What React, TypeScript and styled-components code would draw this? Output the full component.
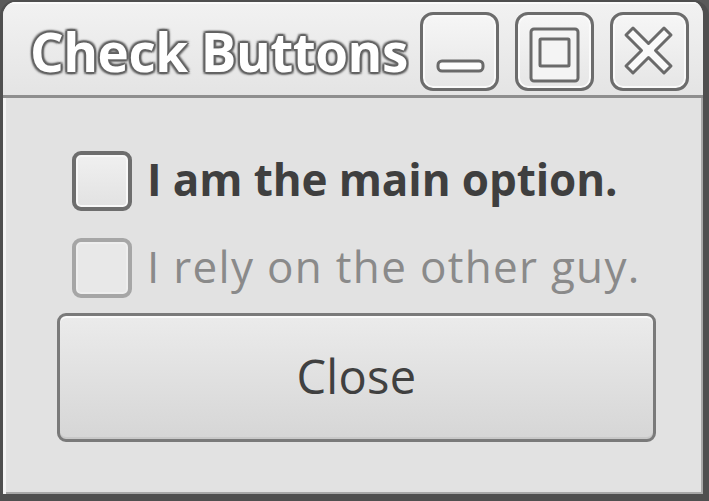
import React from "react";
import styled, { createGlobalStyle } from "styled-components";

const Global = createGlobalStyle`
  html, body { margin: 0; padding: 0; background: #5a5a5a; }
  #root { width: 709px; height: 501px; overflow: hidden; }
  * { box-sizing: border-box; }
`;

const Window = styled.div`
  width: 709px;
  height: 501px;
  display: flex;
  flex-direction: column;
  background: #e2e2e2;
  border-style: solid;
  border-color: #4f4f4f;
  border-width: 2px 6px 7px 3px;
  border-radius: 16px 16px 0 0;
  box-shadow: inset 3px 0 0 #f4f4f4, inset -2px -2px 0 #a8a8a8;
  font-family: "Open Sans", "Noto Sans", sans-serif;
  overflow: hidden;
`;

const TitleBar = styled.div`
  height: 96px;
  flex: none;
  display: flex;
  align-items: center;
  padding: 6px 14px 0 24px;
  background: linear-gradient(#f2f2f2, #e4e4e4);
  border-bottom: 3px solid #8e8e8e;
  box-shadow: inset 0 2px 0 #fbfbfb;
`;

const Title = styled.div`
  flex: 1;
  min-width: 0;
  overflow: hidden;
  white-space: nowrap;
  font-size: 53px;
  font-weight: 700;
  color: #ffffff;
  letter-spacing: -0.5px;
  line-height: 70px;
  padding-left: 3px;
  text-shadow: 0 0 2px #555, 2px 0 1px #666, -2px 0 1px #666, 0 2px 1px #666,
    0 -2px 1px #666, 2px 2px 2px #777, -2px -2px 2px #777, 2px -2px 2px #777,
    -2px 2px 2px #777;
  margin-right: 11px;
`;

const Controls = styled.div`
  display: flex;
  gap: 16px;
`;

const WinButton = styled.div`
  width: 79px;
  height: 79px;
  border: 3px solid #6c6c6c;
  border-radius: 13px;
  background: linear-gradient(#f6f6f6, #e6e6e6);
  box-shadow: inset 0 0 0 2px #fafafa;
  display: flex;
  align-items: center;
  justify-content: center;
`;

const Body = styled.div`
  flex: 1;
  display: flex;
  flex-direction: column;
  padding: 53px 44px 0 54px;
`;

const Row = styled.div`
  display: flex;
  align-items: center;
  gap: 15px;
  height: 60px;
  margin-left: 15px;
  margin-bottom: 27px;
`;

const Box = styled.div<{ $dim?: boolean }>`
  width: 60px;
  height: 60px;
  flex: none;
  border: 4px solid ${(p) => (p.$dim ? "#a6a6a6" : "#6e6e6e")};
  border-radius: 9px;
  background: ${(p) => (p.$dim ? "#e8e8e8" : "linear-gradient(#f0f0f0, #e2e2e2)")};
  box-shadow: inset 0 0 0 2px ${(p) => (p.$dim ? "#eeeeee" : "#f8f8f8")};
`;

const Label = styled.span<{ $dim?: boolean }>`
  font-size: 44px;
  font-weight: ${(p) => (p.$dim ? 400 : 700)};
  color: ${(p) => (p.$dim ? "#8a8a8a" : "#3f3f3f")};
  letter-spacing: ${(p) => (p.$dim ? "1.3px" : "-0.1px")};
  white-space: nowrap;
  line-height: 60px;
  padding-bottom: 4px;
`;

const CloseButton = styled.button`
  height: 129px;
  width: 599px;
  margin-top: -12px;
  border: 3px solid #7a7a7a;
  border-radius: 9px;
  background: linear-gradient(#ebebeb, #d6d6d6);
  box-shadow: inset 0 2px 0 #fafafa, inset 0 -2px 0 #c8c8c8;
  font-family: "Open Sans", "Noto Sans", sans-serif;
  font-size: 47px;
  color: #404040;
  letter-spacing: 0.3px;
  padding: 0 0 4px 0;
`;

export default function App() {
  return (
    <>
      <Global />
      <Window>
        <TitleBar>
          <Title>Check Buttons</Title>
          <Controls>
            <WinButton>
              <svg width="73" height="73" viewBox="0 0 73 73">
                <rect x="15" y="46" width="45" height="10" rx="4" fill="#fdfdfd" stroke="#6a6a6a" strokeWidth="3" />
              </svg>
            </WinButton>
            <WinButton>
              <svg width="73" height="73" viewBox="0 0 73 73">
                <rect x="13" y="14" width="47" height="52" rx="3" fill="#f4f4f4" stroke="#6a6a6a" strokeWidth="3" />
                <rect x="22" y="24" width="29" height="27" rx="1" fill="#f4f4f4" stroke="#6a6a6a" strokeWidth="3" />
              </svg>
            </WinButton>
            <WinButton>
              <svg width="73" height="73" viewBox="0 0 73 73">
                <path
                  d="M13 20 L20 13 L35.5 28.5 L51 13 L58 20 L42.5 35.5 L58 51 L51 58 L35.5 42.5 L20 58 L13 51 L28.5 35.5 Z"
                  fill="#fafafa"
                  stroke="#6a6a6a"
                  strokeWidth="3"
                  strokeLinejoin="round"
                />
              </svg>
            </WinButton>
          </Controls>
        </TitleBar>
        <Body>
          <Row>
            <Box />
            <Label>I am the main option.</Label>
          </Row>
          <Row>
            <Box $dim />
            <Label $dim>I rely on the other guy.</Label>
          </Row>
          <CloseButton>Close</CloseButton>
        </Body>
      </Window>
    </>
  );
}
